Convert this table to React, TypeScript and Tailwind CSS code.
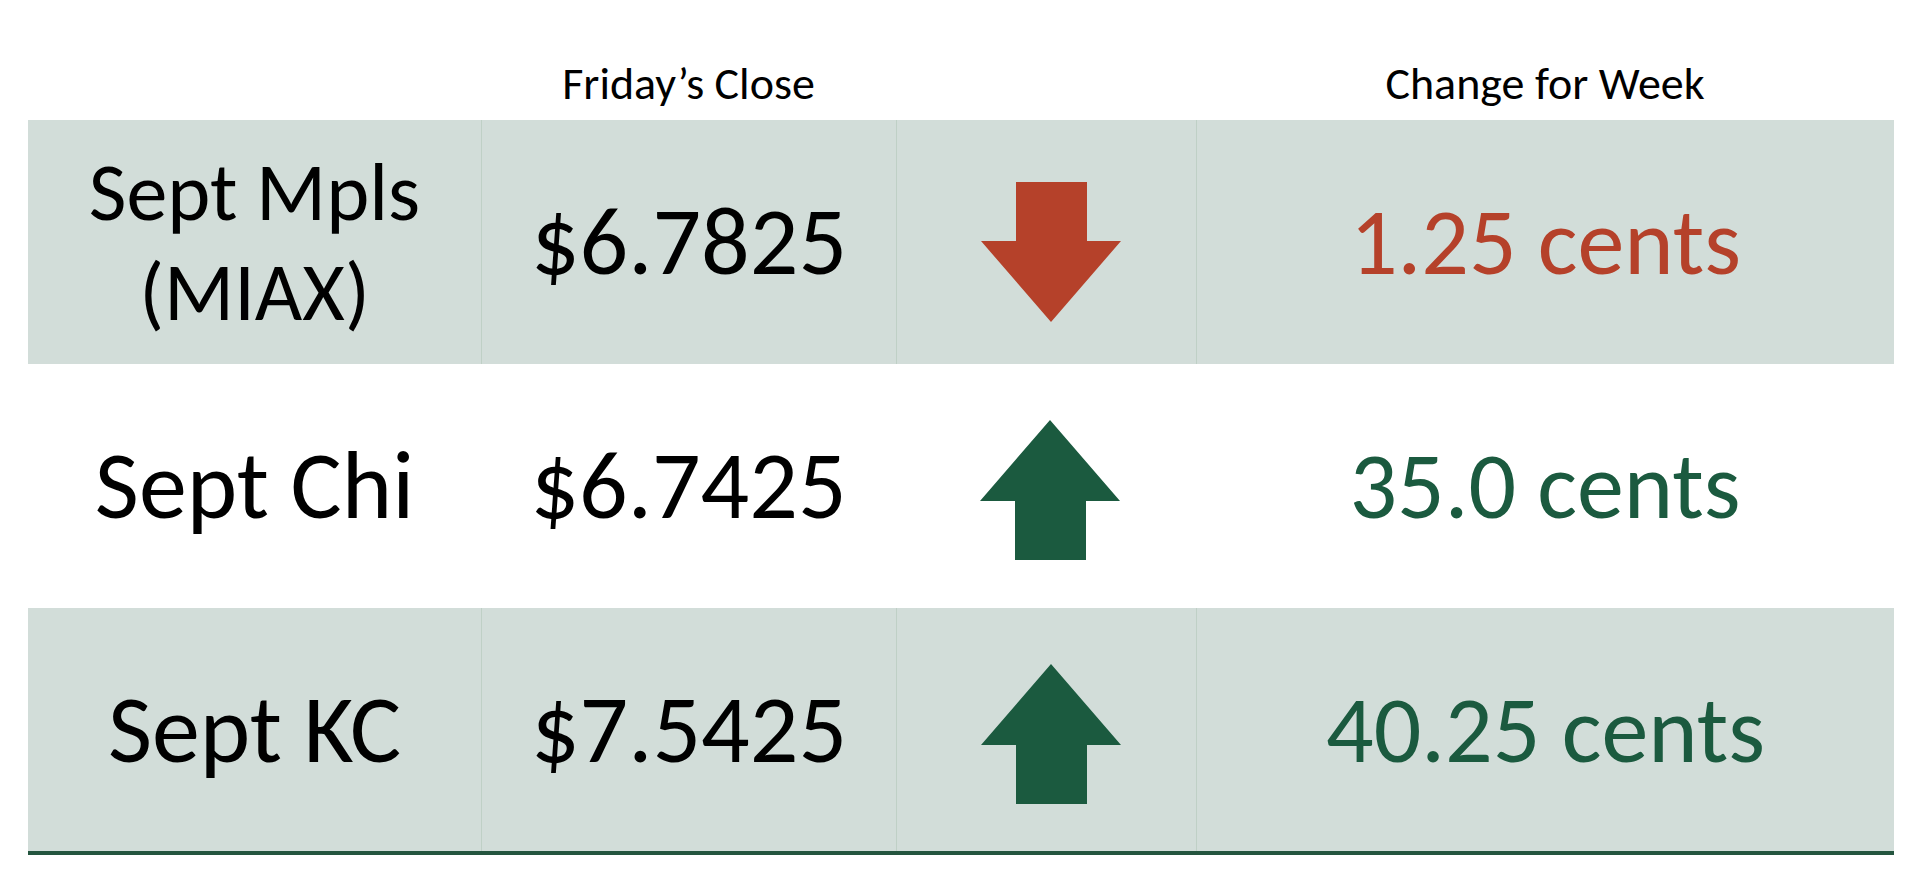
import React from 'react';

const font = { fontFamily: 'Carlito, Calibri, Lato, "Noto Sans", sans-serif' };

function Arrow({ dir }: { dir: 'up' | 'down' }) {
  if (dir === 'down') {
    return (
      <svg width="140" height="140" viewBox="0 0 140 140" className="mt-[20px] ml-[8px]">
        <polygon points="35,0 106,0 106,59 140,59 70,140 0,59 35,59" fill="#b5412a" />
      </svg>
    );
  }
  return (
    <svg width="140" height="140" viewBox="0 0 140 140" className="mt-[8px] ml-[8px]">
      <polygon points="70,0 140,81 106,81 106,140 35,140 35,81 0,81" fill="#1b5a3f" />
    </svg>
  );
}

const rows = [
  { label: ['Sept Mpls', '(MIAX)'], price: '$6.7825', dir: 'down' as const, change: '1.25 cents', shaded: true },
  { label: ['Sept Chi'], price: '$6.7425', dir: 'up' as const, change: '35.0 cents', shaded: false },
  { label: ['Sept KC'], price: '$7.5425', dir: 'up' as const, change: '40.25 cents', shaded: true },
];

export default function App() {
  return (
    <div className="w-[1920px] h-[873px] bg-white text-black" style={font}>
      <div className="ml-[28px] w-[1866px]">
        {/* header */}
        <div className="grid grid-cols-[453px_415px_300px_698px] h-[120px] text-[46px] leading-none">
          <div />
          <div className="flex justify-center pt-[60px]">Friday’s Close</div>
          <div />
          <div className="flex justify-center pt-[60px]">Change for Week</div>
        </div>

        {rows.map((r, i) => {
          const last = i === rows.length - 1;
          const cell = r.shaded ? 'border-l border-[#bfd0c6]' : '';
          return (
            <div
              key={i}
              className={`grid grid-cols-[453px_415px_300px_698px] ${last ? 'h-[247px] border-b-4 border-[#24553f]' : 'h-[244px]'} ${r.shaded ? 'bg-[#d2ddd9]' : 'bg-white'}`}
            >
              <div className="flex flex-col items-center justify-center">
                {r.label.length > 1 ? (
                  <div className="text-center text-[82px] leading-[100px]">
                    <div>{r.label[0]}</div>
                    <div>{r.label[1]}</div>
                  </div>
                ) : (
                  <div className="text-[96px] leading-none">{r.label[0]}</div>
                )}
              </div>
              <div className={`flex items-center justify-center text-[96px] leading-none ${cell}`}>{r.price}</div>
              <div className={`flex items-center justify-center ${cell}`}>
                <Arrow dir={r.dir} />
              </div>
              <div
                className={`flex items-center justify-center text-[94px] leading-none ${cell} ${r.dir === 'down' ? 'text-[#b5412a]' : 'text-[#1b5a3f]'}`}
              >
                {r.change}
              </div>
            </div>
          );
        })}
      </div>
    </div>
  );
}
